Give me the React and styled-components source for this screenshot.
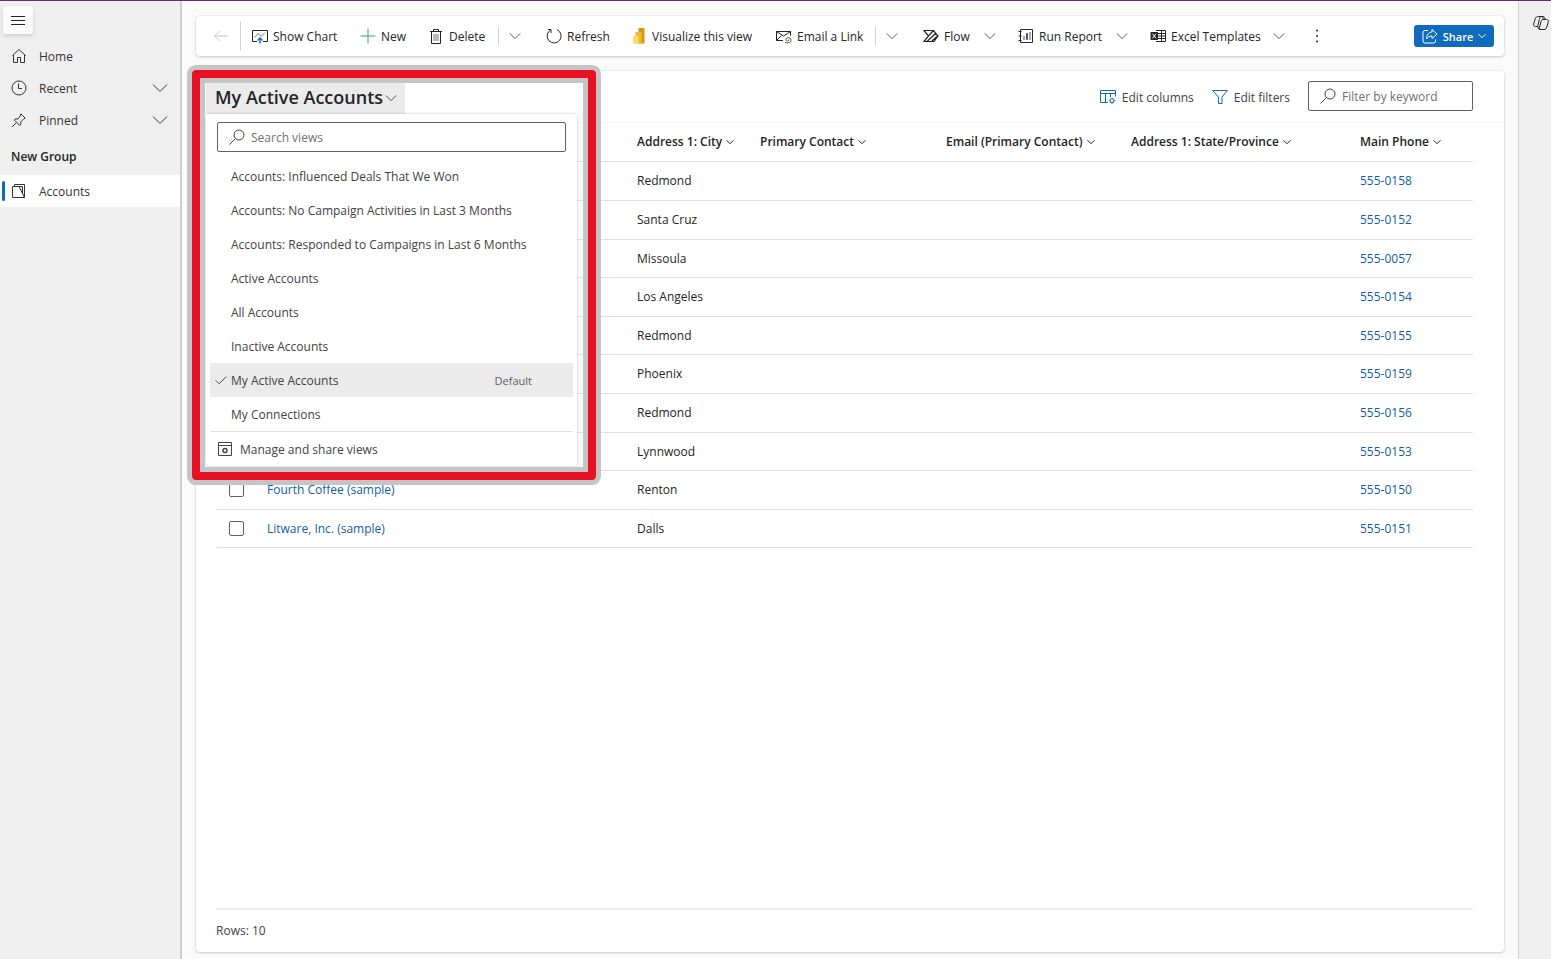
import styled, { createGlobalStyle, css } from "styled-components";

const commands = [
  { label: "Show Chart", icon: "chart", width: 108 },
  { label: "New", icon: "plus", width: 68 },
  { label: "Delete", icon: "trash", width: 81, split: true },
  { label: "Refresh", icon: "refresh", width: 85 },
  { label: "Visualize this view", icon: "powerBi", width: 145 },
  { label: "Email a Link", icon: "mail", width: 110, split: true },
  { label: "Flow", icon: "flow", width: 95, menu: true },
  { label: "Run Report", icon: "report", width: 132, menu: true },
  { label: "Excel Templates", icon: "excel", width: 157, menu: true },
];

const views = [
  "Accounts: Influenced Deals That We Won",
  "Accounts: No Campaign Activities in Last 3 Months",
  "Accounts: Responded to Campaigns in Last 6 Months",
  "Active Accounts",
  "All Accounts",
  "Inactive Accounts",
  "My Active Accounts",
  "My Connections",
];

const columns = [
  { label: "Address 1: City", width: 123 },
  { label: "Primary Contact", width: 186 },
  { label: "Email (Primary Contact)", width: 185 },
  { label: "Address 1: State/Province", width: 229 },
  { label: "Main Phone", width: 123 },
];

const rows = [
  { city: "Redmond", phone: "555-0158" },
  { city: "Santa Cruz", phone: "555-0152" },
  { city: "Missoula", phone: "555-0057" },
  { city: "Los Angeles", phone: "555-0154" },
  { city: "Redmond", phone: "555-0155" },
  { city: "Phoenix", phone: "555-0159" },
  { city: "Redmond", phone: "555-0156" },
  { city: "Lynnwood", phone: "555-0153" },
  { name: "Fourth Coffee (sample)", city: "Renton", phone: "555-0150" },
  { name: "Litware, Inc. (sample)", city: "Dalls", phone: "555-0151" },
];

const glyphs = {
  menu: <path d="M1 4.5h14M1 8.5h14M1 12.5h14" />,
  home: <path d="M1.5 7.5 8 1.5l6.5 6M2.5 6.5v8h4v-5h3v5h4v-8" />,
  clock: (
    <>
      <circle cx="8" cy="8" r="7" />
      <path d="M7.5 3.5v5h3.5" />
    </>
  ),
  pin: <path d="M9.8 1.8 14.2 6.2l-1.4.6-2.8 2.8-.4 3.2-1 .6-5.200-5.200.6-1 3.200-.4L9.200 4zM5.500 10.500 1 15" />,
  accounts: (
    <path d="M1.500 3.500v11h12v-13h-10v2M1.500 3.500h6.500l5.500 11M5.500 3.500h6v7" />
  ),
  back: <path d="M14.500 8h-13M7 2.500 1.500 8 7 13.500" />,
  chart: (
    <>
      <path d="M5 13.500H.5v-11h15v11H11" />
      <path d="m2.500 9.500 3.500-4 3 3 4-4" stroke="#2fa866" />
      <path d="M8 15.500V11M5.500 12.500 8 10l2.500 2.500" stroke="#1a6fc4" strokeWidth="1.500" />
    </>
  ),
  plus: <path d="M8 .5v15M.5 8h15" stroke="#2fa866" />,
  trash: (
    <>
      <path d="M2 3.500h12M5.500 3.500v-2h5v2M3.500 3.500v12h9v-12" />
      <path d="M6 6v7M8 6v7M10 6v7" stroke="#767676" />
    </>
  ),
  refresh: <path d="M5 1.500v3.500M5 1.500H2M4.500 2a7 7 0 1 0 6.500-.4" />,
  powerBi: (
    <g stroke="none">
      <rect x="7.500" y="0" width="6" height="15.500" rx=".6" fill="#d9980f" />
      <rect x="4.500" y="4" width="6" height="11.500" rx=".6" fill="#eebc2c" />
      <rect x="2" y="8" width="5.500" height="7.500" rx=".6" fill="#f8dc6c" />
    </g>
  ),
  mail: (
    <>
      <path d="M7 12.500H.5v-9h14v4M.5 3.500l7 4.500 7-4.500M.5 12.500l5-5" />
      <path d="M9 14.500c4 1 6-.2 6-2.500 0-3.200-5-3-5-.3 0 1.900 3 2 3-.2" strokeWidth=".8" />
    </>
  ),
  flow: (
    <path
      d="M1 2.500h9.500L15 8l-4 5.500H1L5.500 8zM5.500 8l5-5.500M4 13.500l9-8.500M8.500 13.500 14.500 8"
      strokeWidth="1.200"
    />
  ),
  report: (
    <>
      <path d="M2.500 1.500h12v13h-12zM.5 3.500h3M.5 8h3M.5 12.500h3" />
      <path d="M6 8v4M8.500 5.500h1v6h-1zM12 4v8" strokeWidth=".8" />
    </>
  ),
  excel: (
    <>
      <path d="M6 2.500h9.500v11H6M7 5.500h8.500M7 8h8.500M7 10.500h8.500M11.500 2.500v11" />
      <path d="M.5 4H8v8H.5z" fill="#262626" stroke="none" />
      <path d="m2.500 5.800 3.500 4.500M6 5.800l-3.500 4.500" stroke="#fff" />
    </>
  ),
  share: (
    <>
      <path d="M6 2.500H3a2 2 0 0 0-2 2V13a2 2 0 0 0 2 2h8.500a2 2 0 0 0 2-2v-1.500" />
      <path d="M10 1.500 15 6l-5 4.500V8C7.500 8 6 8.800 4.500 11 4.700 7 6.500 4.300 10 4z" />
    </>
  ),
  columns: (
    <path d="M8 13.500H.5v-12h15v6M.5 4.500h15M5.500 4.500v9M10.500 4.500V8M12 8.500v1M12 13.500v1.500M8.800 11.700h1M14.200 11.700h1.300M9.800 9.500l.7.7M14.200 9.500l-.7.700M9.800 14l.7-.7M14.200 14l-.7-.7M12 9.800a1.900 1.900 0 1 0 0 3.800 1.900 1.900 0 0 0 0-3.800" />
  ),
  filter: <path d="M.7 1.500h14.600L10 8.200v6.300H6.500V8.200z" />,
  search: (
    <>
      <circle cx="10" cy="6" r="5" />
      <path d="M6.400 9.600.5 15.500" />
    </>
  ),
  check: <path d="m1 8.500 4.500 4.500L15 3.500" strokeWidth="1.300" />,
  views: (
    <>
      <path d="M1.500 1.500h13v13h-13zM1.500 4.500h13" />
      <circle cx="8" cy="9.500" r="2" strokeWidth="1.500" />
    </>
  ),
  chevron: <path d="m1 4.500 7 7 7-7" />,
  copilot: (
    <path d="M6 1.500h4.200c.8 0 1.300.6 1.600 1.500l.5 1.500h1.200c1.500 0 2.200 1.200 1.800 2.600l-1.500 5c-.4 1.500-1.300 2.400-2.800 2.400H7c-.9 0-1.500-.6-1.800-1.500L4.700 11.500H2.500C1 11.500.3 10.300.7 8.900l1.500-5C2.700 2.300 3.900 1.500 5.400 1.500zM8.500 1.500C7 1.500 6.700 3 6.300 4.500l-1.600 7M12.300 4.500H10c-1 0-1.500.8-1.800 1.800L6.800 11c-.4 1.500-.6 3.500.2 3.500M10 1.500v3" />
  ),
};

function Icon({ name, size = 16, weight = 1 }) {
  return (
    <Svg
      width={size}
      height={size}
      viewBox="0 0 16 16"
      fill="none"
      stroke="currentColor"
      strokeWidth={weight}
      aria-hidden="true"
    >
      {glyphs[name]}
    </Svg>
  );
}

function Sidebar() {
  return (
    <Side>
      <MenuButton aria-label="Site map">
        <Icon name="menu" />
      </MenuButton>
      <NavLink href="#home">
        <Icon name="home" />
        <span>Home</span>
      </NavLink>
      <NavLink as="button">
        <Icon name="clock" />
        <span>Recent</span>
        <Icon name="chevron" />
      </NavLink>
      <NavLink as="button">
        <Icon name="pin" />
        <span>Pinned</span>
        <Icon name="chevron" />
      </NavLink>
      <GroupTitle>New Group</GroupTitle>
      <NavLink href="#accounts" $active>
        <Icon name="accounts" />
        <span>Accounts</span>
      </NavLink>
    </Side>
  );
}

function CommandBar() {
  return (
    <Commands>
      <BackButton aria-label="Back">
        <Icon name="back" />
      </BackButton>
      {commands.map((item) => (
        <CommandGroup key={item.label}>
          <Command $width={item.width}>
            <Icon name={item.icon} />
            <span>{item.label}</span>
            {item.menu && (
              <MenuMark>
                <Icon name="chevron" size={12} />
              </MenuMark>
            )}
          </Command>
          {item.split && (
            <SplitButton aria-label={`More ${item.label} options`}>
              <Icon name="chevron" size={12} />
            </SplitButton>
          )}
        </CommandGroup>
      ))}
      <MoreButton aria-label="More commands">
        <svg width="4" height="16" viewBox="0 0 4 16" fill="currentColor">
          <circle cx="2" cy="2.500" r="1" />
          <circle cx="2" cy="8" r="1" />
          <circle cx="2" cy="13.500" r="1" />
        </svg>
      </MoreButton>
      <ShareButton>
        <Icon name="share" />
        <span>Share</span>
        <Icon name="chevron" size={8} weight={2} />
      </ShareButton>
    </Commands>
  );
}

function ViewPicker() {
  return (
    <Picker>
      <ViewButton aria-expanded="true">
        My Active Accounts
        <Icon name="chevron" size={12} />
      </ViewButton>
      <Popup>
        <ViewSearch>
          <Icon name="search" />
          <input type="text" placeholder="Search views" aria-label="Search views" />
        </ViewSearch>
        {views.map((view) => {
          const selected = view === "My Active Accounts";
          return (
            <ViewOption key={view} $selected={selected}>
              <CheckSlot>{selected && <Icon name="check" size={12} />}</CheckSlot>
              <span>{view}</span>
              {selected && <DefaultTag>Default</DefaultTag>}
            </ViewOption>
          );
        })}
        <ManageButton>
          <Icon name="views" />
          Manage and share views
        </ManageButton>
      </Popup>
      <Highlight />
    </Picker>
  );
}

function AccountsTable() {
  return (
    <Table>
      <colgroup>
        <Col $width={40} />
        <col />
        {columns.map((c) => (
          <Col key={c.label} $width={c.width} />
        ))}
      </colgroup>
      <thead>
        <tr>
          <th />
          <th />
          {columns.map((c) => (
            <th key={c.label} scope="col">
              <SortButton>
                {c.label}
                <Icon name="chevron" size={8} weight={2} />
              </SortButton>
            </th>
          ))}
        </tr>
      </thead>
      <tbody>
        {rows.map((row) => (
          <tr key={row.phone}>
            <CheckCell>
              {row.name && <Checkbox type="checkbox" aria-label={`Select ${row.name}`} />}
            </CheckCell>
            <td>{row.name && <a href="#account">{row.name}</a>}</td>
            <td>{row.city}</td>
            <td />
            <td />
            <td />
            <td>
              <a href={`tel:${row.phone}`}>{row.phone}</a>
            </td>
          </tr>
        ))}
      </tbody>
    </Table>
  );
}

export default function App() {
  return (
    <Page>
      <GlobalStyle />
      <Sidebar />
      <Main>
        <CommandBar />
        <Card>
          <CardHeader>
            <ViewPicker />
            <Tools>
              <ToolButton>
                <Icon name="columns" />
                Edit columns
              </ToolButton>
              <ToolButton>
                <Icon name="filter" />
                Edit filters
              </ToolButton>
              <KeywordBox>
                <Icon name="search" />
                <input type="text" placeholder="Filter by keyword" aria-label="Filter by keyword" />
              </KeywordBox>
            </Tools>
          </CardHeader>
          <AccountsTable />
          <Footer>Rows: 10</Footer>
        </Card>
      </Main>
      <Rail>
        <RailButton aria-label="Copilot">
          <Icon name="copilot" />
        </RailButton>
      </Rail>
    </Page>
  );
}

const GlobalStyle = createGlobalStyle`
  * {
    box-sizing: border-box;
  }

  body {
    margin: 0;
    color: #242424;
    font-family: "Open Sans", "Noto Sans", sans-serif;
    font-size: 12px;
    line-height: 21px;
  }

  button,
  input {
    padding: 0;
    border: 0;
    background: none;
    color: inherit;
    font: inherit;
  }

  a {
    color: #115ea3;
    text-decoration: none;
  }
`;

const Svg = styled.svg`
  display: block;
  flex: none;
`;

const Page = styled.div`
  display: flex;
  min-height: 100vh;
  border-top: 1px solid #742774;
  background: #fafafa;
`;

const Side = styled.nav`
  flex: none;
  width: 182px;
  padding-top: 5px;
  border-right: 2px solid #cecece;
  background: #efefef;
`;

const MenuButton = styled.button`
  display: flex;
  align-items: center;
  justify-content: center;
  width: 30px;
  height: 28px;
  margin: 0 0 6px 3px;
  border-radius: 2px;
  background: #fafafa;
  box-shadow: 0 2px 4px rgba(0, 0, 0, 0.14);
`;

const NavLink = styled.a`
  display: flex;
  align-items: center;
  width: 100%;
  height: 32px;
  padding: 0 12px 0 11px;
  color: #333333;
  text-align: left;

  span {
    flex: 1;
    margin-left: 12px;
  }

  ${({ $active }) =>
    $active &&
    css`
      padding-left: 2px;
      background: #ffffff;

      &::before {
        width: 3px;
        height: 20px;
        margin-right: 6px;
        border-radius: 2px;
        background: #0f6cbd;
        content: "";
      }
    `}
`;

const GroupTitle = styled.h2`
  height: 39px;
  margin: 0;
  padding-left: 11px;
  font-size: 12px;
  font-weight: 600;
  line-height: 41px;
`;

const Main = styled.main`
  display: flex;
  flex: 1;
  flex-direction: column;
  gap: 15px;
  min-width: 0;
  padding: 15px 14px 7px;
`;

const surface = css`
  border-radius: 4px;
  background: #ffffff;
  box-shadow: 0 0 2px rgba(0, 0, 0, 0.12), 0 1px 3px rgba(0, 0, 0, 0.16);
`;

const Commands = styled.div`
  ${surface}
  display: flex;
  align-items: center;
  height: 40px;
  padding-right: 10px;
`;

const BackButton = styled.button`
  display: flex;
  align-items: center;
  justify-content: flex-end;
  width: 45px;
  height: 30px;
  padding-right: 11px;
  border-right: 1px solid #d1d1d1;
  color: #c7c7c7;
`;

const CommandGroup = styled.div`
  display: flex;
  align-items: center;
`;

const Command = styled.button`
  display: flex;
  align-items: center;
  gap: 5px;
  width: ${({ $width }) => $width}px;
  height: 32px;
  padding: 0 11px;
  white-space: nowrap;
`;

const MenuMark = styled.span`
  margin-left: auto;
`;

const SplitButton = styled.button`
  display: flex;
  align-items: center;
  justify-content: center;
  width: 37px;
  height: 18px;
  padding-right: 4px;
  border-left: 1px solid #d1d1d1;
`;

const MoreButton = styled.button`
  display: flex;
  align-items: center;
  justify-content: center;
  width: 42px;
  height: 32px;
`;

const ShareButton = styled.button`
  display: flex;
  align-items: center;
  justify-content: center;
  gap: 5px;
  width: 80px;
  height: 22px;
  margin-left: auto;
  border-radius: 3px;
  background: #0f6cbd;
  color: #ffffff;
  font-size: 11px;
  font-weight: 600;
`;

const Card = styled.section`
  ${surface}
  display: flex;
  flex: 1;
  flex-direction: column;
`;

const CardHeader = styled.header`
  display: flex;
  align-items: flex-start;
  justify-content: space-between;
  height: 52px;
  padding: 10px 31px 0 10px;
  border-bottom: 1px solid #f5f5f5;
`;

const Picker = styled.div`
  position: relative;
  z-index: 1;
  margin-top: 2px;
`;

const ViewButton = styled.button`
  display: flex;
  align-items: center;
  justify-content: space-between;
  width: 199px;
  height: 31px;
  padding: 0 8px 2px 9px;
  background: #ebebeb;
  font-size: 18px;
  font-weight: 600;
  white-space: nowrap;
`;

const Popup = styled.div`
  position: absolute;
  top: 31px;
  left: 0;
  width: 371px;
  padding: 8px 4px 0;
  border-radius: 4px;
  background: #ffffff;
  box-shadow: 0 0 3px rgba(0, 0, 0, 0.24);
  color: #424242;
`;

const SearchField = styled.label`
  display: flex;
  align-items: center;
  gap: 6px;
  height: 30px;
  padding: 0 11px;
  border: 1px solid #616161;
  border-radius: 2px;
  color: #424242;

  input {
    flex: 1;
    min-width: 0;
    outline: 0;
  }

  input::placeholder {
    color: #707070;
    opacity: 1;
  }
`;

const ViewSearch = styled(SearchField)`
  margin: 0 7px 7px;
`;

const KeywordBox = styled(SearchField)`
  width: 165px;
`;

const ViewOption = styled.button`
  display: flex;
  align-items: center;
  width: 100%;
  height: 34px;
  padding-right: 41px;
  background: ${({ $selected }) => ($selected ? "#ebebeb" : "transparent")};
  white-space: nowrap;
`;

const CheckSlot = styled.span`
  flex: none;
  width: 21px;
  padding-left: 5px;
`;

const DefaultTag = styled.span`
  margin-left: auto;
  color: #616161;
  font-size: 11px;
`;

const ManageButton = styled.button`
  display: flex;
  align-items: center;
  gap: 7px;
  width: 100%;
  height: 35px;
  padding-left: 7px;
  border-top: 1px solid #e0e0e0;
`;

/* red callout drawn round the open view list */
const Highlight = styled.div`
  position: absolute;
  top: -13px;
  left: -14px;
  width: 404px;
  height: 410px;
  border: 8px solid #e81123;
  border-radius: 4px;
  box-shadow: 0 0 0 5px #c5c5c5, inset 0 0 0 5px #c5c5c5;
  pointer-events: none;
`;

const Tools = styled.div`
  display: flex;
  align-items: flex-start;
  gap: 18px;
`;

const ToolButton = styled.button`
  display: flex;
  align-items: center;
  gap: 6px;
  height: 32px;
  color: #424242;

  svg {
    color: #0f6cbd;
  }
`;

const Table = styled.table`
  width: calc(100% - 52px);
  margin: 0 31px 0 21px;
  border-collapse: collapse;
  table-layout: fixed;

  th,
  td {
    height: 39px;
    padding: 0 0 0 10px;
    border-bottom: 1px solid #e0e0e0;
    text-align: left;
    white-space: nowrap;
  }

  th {
    height: 38px;
  }

  tbody tr:nth-child(5n) td,
  tbody tr:nth-child(5n + 3) td {
    height: 38px;
  }
`;

const Col = styled.col`
  width: ${({ $width }) => $width}px;
`;

const CheckCell = styled.td`
  && {
    padding-left: 12px;
  }
`;

const Checkbox = styled.input`
  display: block;
  width: 15px;
  height: 15px;
  margin: 0;
  border: 1px solid #616161;
  border-radius: 2px;
  appearance: none;

  &:checked {
    background: #0f6cbd;
  }
`;

const SortButton = styled.button`
  display: flex;
  align-items: center;
  gap: 4px;
  font-weight: 600;
`;

const Footer = styled.footer`
  height: 44px;
  margin: auto 31px 0 20px;
  padding-top: 10px;
  border-top: 2px solid #eeeeee;
  color: #424242;
`;

const Rail = styled.aside`
  flex: none;
  width: 33px;
  padding: 14px 0 0 14px;
  border-left: 1px solid #d1d1d1;
  background: #efefef;
`;

const RailButton = styled.button`
  display: block;
`;
